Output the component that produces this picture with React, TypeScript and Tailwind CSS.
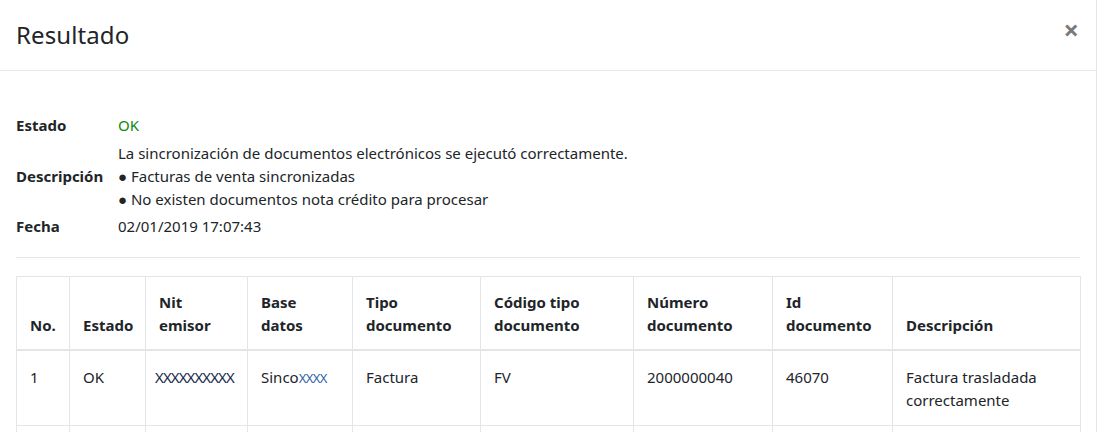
import React from "react";

const cols = [53, 76, 102, 105, 128, 153, 139, 120, 188];

export default function App() {
  const font = { fontFamily: '"Noto Sans", "Open Sans", sans-serif' };
  return (
    <div className="w-[1097px] h-[432px] overflow-hidden bg-white text-[#212529] border-r border-[#e6e6e6]" style={font}>
      <div className="h-[71px] flex items-center justify-between pl-4 pr-[17px] border-b border-[#e5e9ec]">
        <h4 className="text-[24px] leading-none font-normal mt-[-1px] tracking-[0.1px]">Resultado</h4>
        <button className="text-[#7a7a7a] text-[27px] font-bold leading-none mt-[-11px]">×</button>
      </div>
      <div className="pl-4 pr-[16px] pt-[43px]">
        <div className="flex flex-col gap-[5px] text-[15px] leading-[23px]">
          <div className="flex items-center">
            <div className="w-[102px] font-bold">Estado</div>
            <div className="text-[#0c8a0c]">OK</div>
          </div>
          <div className="flex items-center">
            <div className="w-[102px] font-bold">Descripción</div>
            <div>
              <div>La sincronización de documentos electrónicos se ejecutó correctamente.</div>
              <div>● Facturas de venta sincronizadas</div>
              <div>● No existen documentos nota crédito para procesar</div>
            </div>
          </div>
          <div className="flex items-center mt-[-1px]">
            <div className="w-[102px] font-bold">Fecha</div>
            <div>02/01/2019 17:07:43</div>
          </div>
        </div>
        <hr className="mt-[19px] mb-[18px] border-t border-[#e5e8eb]" />
        <table className="table-fixed border-collapse text-[15px] leading-[23px] w-[1064px]">
          <colgroup>
            {cols.map((w, i) => (
              <col key={i} style={{ width: w }} />
            ))}
          </colgroup>
          <thead>
            <tr>
              {[
                "No.",
                "Estado",
                "Nit emisor",
                "Base datos",
                "Tipo documento",
                "Código tipo documento",
                "Número documento",
                "Id documento",
                "Descripción",
              ].map((h, i) => (
                <th
                  key={i}
                  className="border border-[#e3e6e9] border-b-2 px-[13px] pt-[14px] pb-[12px] text-left align-bottom font-bold"
                >
                  {h}
                </th>
              ))}
            </tr>
          </thead>
          <tbody>
            <tr>
              <td className="border border-[#e3e6e9] px-[13px] pt-[15px] pb-[13px] align-top">1</td>
              <td className="border border-[#e3e6e9] px-[13px] pt-[15px] pb-[13px] align-top">OK</td>
              <td className="border border-[#e3e6e9] px-[9px] pt-[15px] pb-[13px] align-top">
                <span className="text-[#1c2a4d] tracking-[-0.9px]">XXXXXXXXXX</span>
              </td>
              <td className="border border-[#e3e6e9] px-[13px] pt-[15px] pb-[13px] align-top">
                Sinco<span className="text-[#2f5fa8] text-[13px] tracking-[-0.6px]">XXXX</span>
              </td>
              <td className="border border-[#e3e6e9] px-[13px] pt-[15px] pb-[13px] align-top">Factura</td>
              <td className="border border-[#e3e6e9] px-[13px] pt-[15px] pb-[13px] align-top">FV</td>
              <td className="border border-[#e3e6e9] px-[13px] pt-[15px] pb-[13px] align-top">2000000040</td>
              <td className="border border-[#e3e6e9] px-[13px] pt-[15px] pb-[13px] align-top">46070</td>
              <td className="border border-[#e3e6e9] px-[13px] pt-[15px] pb-[13px] align-top">
                Factura trasladada correctamente
              </td>
            </tr>
            <tr>
              {cols.map((_, i) => (
                <td key={i} className="border border-[#e3e6e9] px-[13px] py-[13px]">&nbsp;</td>
              ))}
            </tr>
          </tbody>
        </table>
      </div>
    </div>
  );
}
